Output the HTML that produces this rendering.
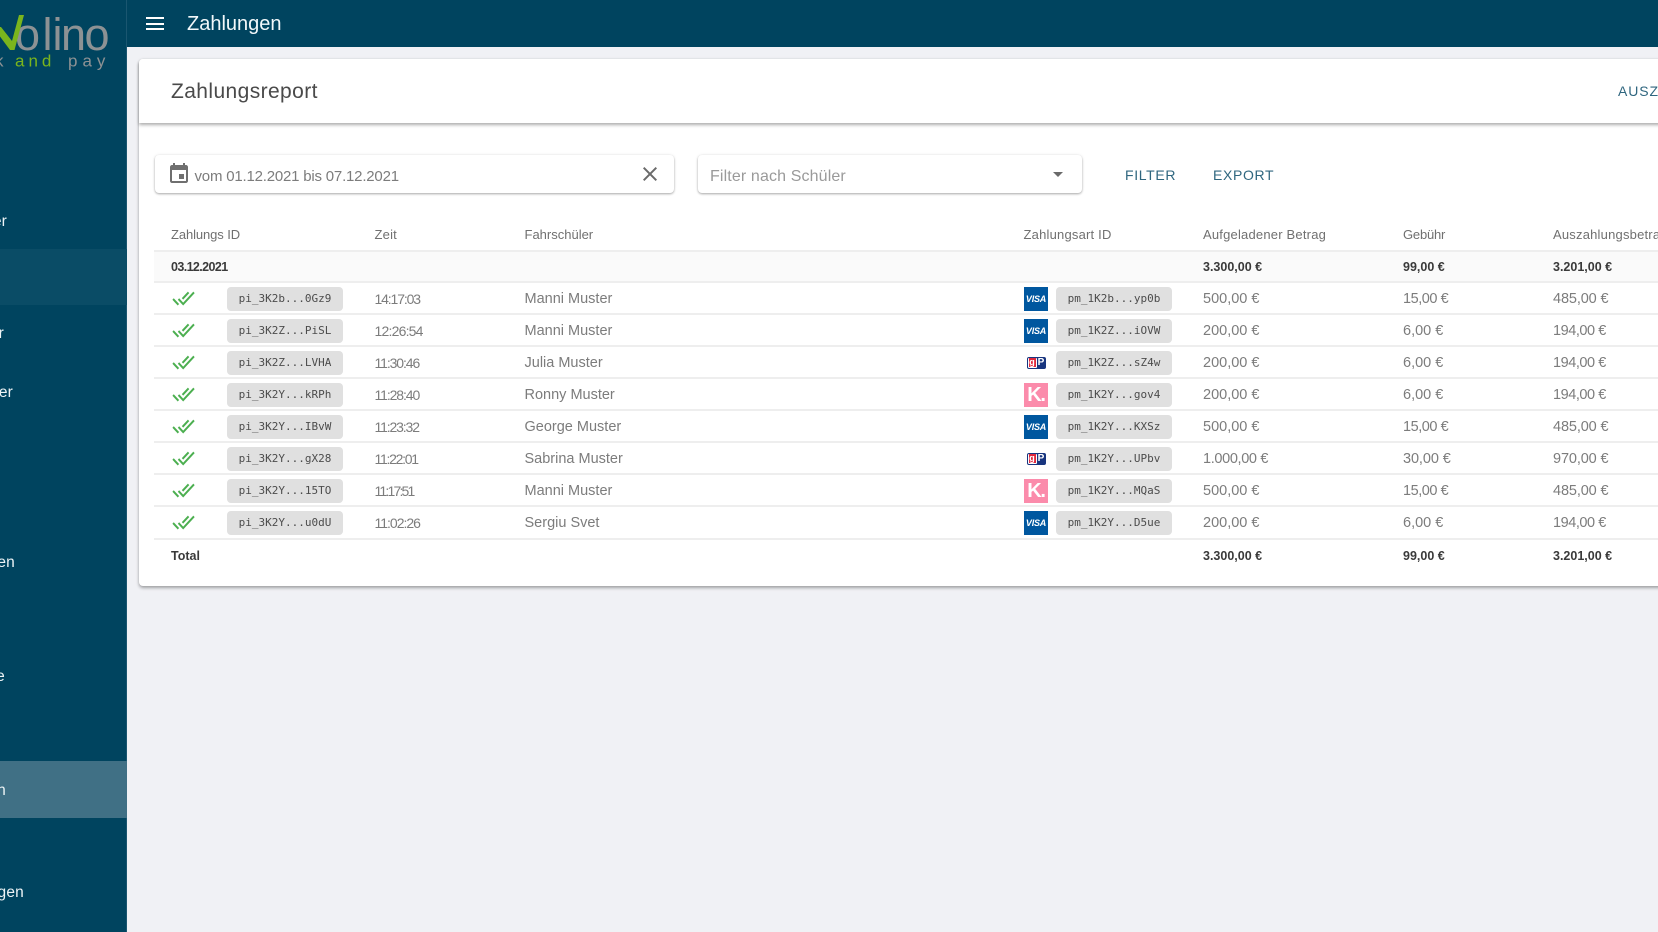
<!DOCTYPE html>
<html lang="de">
<head>
<meta charset="utf-8">
<title>Zahlungen</title>
<style>
html,body{margin:0;padding:0;width:1658px;height:932px;overflow:hidden;background:#f0f1f5;font-family:"Liberation Sans",sans-serif;color:#787878}
*{box-sizing:border-box}
#wrap{position:absolute;left:0;top:0;width:1658px;height:932px;overflow:hidden;filter:blur(.35px)}
.a{position:absolute;white-space:nowrap}
#side{position:absolute;left:0;top:0;width:127px;height:932px;background:#00445f;overflow:hidden}
#side .ln{position:absolute;left:126px;top:0;width:1px;height:932px;background:#1a5670}
#side .it{position:absolute;left:0;width:127px}
#side .t{position:absolute;color:#eef4f6;font-size:15.5px;line-height:20px;white-space:nowrap;letter-spacing:.2px}
#top{position:absolute;left:127px;top:0;width:1531px;height:47px;background:#00445f}
#top i{position:absolute;left:19px;width:18px;height:2px;background:#fff;display:block}
#card{position:absolute;left:139px;top:59px;width:1530px;height:527px;background:#fff;border-radius:4px;box-shadow:0 2px 3px rgba(0,0,0,.32),0 0 3px rgba(0,0,0,.08)}
#head{position:absolute;left:139px;top:59px;width:1530px;height:64px;background:#fff;border-radius:4px 4px 0 0;box-shadow:0 2px 3px rgba(0,0,0,.32)}
.field{position:absolute;top:155px;height:38px;background:#fff;border-radius:4px;box-shadow:0 1px 2px rgba(0,0,0,.32),0 0 4px rgba(0,0,0,.06)}
.btn{position:absolute;top:165px;line-height:20px;font-size:14px;color:#2f667f;letter-spacing:.65px;white-space:nowrap}
.h{position:absolute;top:225px;line-height:20px;font-size:13px;color:#707070;letter-spacing:.2px;white-space:nowrap}
.row{position:absolute;left:154px;width:1504px;height:32px;border-bottom:2px solid #eeeeee}
.row span{position:absolute;top:0;line-height:33px;font-size:14.5px;color:#7c7c7c;white-space:nowrap}
.row span.b{font-size:12.5px;font-weight:700;color:#3a3a3a;line-height:31px}
.c1{left:17px}.c2{left:220.5px}.c3{left:370.5px}.c5{left:1049px}.c6{left:1249px}.c7{left:1399px}
.row span.c2{font-size:14px;line-height:32px}
.ck{position:absolute;left:17.5px;top:8px;width:23px;height:14.5px}
.chip{position:absolute;top:4px;height:24px;width:116px;background:#e0e0e0;border-radius:4px;font:11px/24px "DejaVu Sans Mono","Liberation Mono",monospace;color:#4c4c4c;text-align:center;white-space:nowrap}
.p1{left:73px}.p2{left:902px}
.ic{position:absolute;left:870px;top:4px;width:24px;height:24px}
.visa{background:#00579f;color:#fff;font:italic 700 9px/24px "Liberation Sans",sans-serif;text-align:center;letter-spacing:-.2px}
.kl{background:#fb8bab;color:#fff;font:700 20px/24px "Liberation Sans",sans-serif;text-align:center;letter-spacing:-1.2px}
.gp{left:872.5px;top:9.5px;width:19px;height:12px;background:#18357f;border-radius:2px}
.gp b{position:absolute;left:1px;top:1px;width:9px;height:10px;background:#fff;border-radius:1px}
.gp u{position:absolute;left:2px;top:1.5px;width:7px;height:9px;background:#e0283c;color:#fff;font:700 9px/8px "Liberation Sans",sans-serif;text-align:center;text-decoration:none}
.gp em{position:absolute;left:10.5px;top:1px;width:8px;color:#fff;font:700 10px/10px "Liberation Sans",sans-serif;text-align:center}
</style>
</head>
<body>
<svg width="0" height="0" style="position:absolute"><defs><symbol id="dn" viewBox="0 5 24 14" preserveAspectRatio="none"><path fill="#4caf50" d="M18 7l-1.41-1.41-6.34 6.34 1.41 1.41L18 7zm4.24-1.41L11.66 16.17 7.48 12l-1.41 1.41L11.66 19l12-12-1.42-1.41zM.41 13.41L6 19l1.41-1.41L1.83 12 .41 13.41z"/></symbol></defs></svg>
<div id="wrap">
<div id="side">
  <div class="ln"></div>
  <svg class="a" style="left:0;top:0" width="126" height="76" viewBox="0 0 126 76">
    <text y="50" x="15 42.5 52.5 61 84.5" font-family="Liberation Sans" font-size="45" fill="#8d9294">olino</text>
    <polygon points="-7,27 1,27 12,41 19,15 24,15 14.5,50 10,50" fill="#7ab51d"/>
    <text y="66.5" x="-5" font-family="Liberation Sans" font-size="17" fill="#8d9294">k</text>
    <text y="66.5" x="15" font-family="Liberation Sans" font-size="17" letter-spacing="4" fill="#7ab51d">and</text>
    <text y="66.5" x="68" font-family="Liberation Sans" font-size="17" letter-spacing="5" fill="#8d9294">pay</text>
  </svg>
  <div class="it" style="top:249px;height:56px;background:#0a4c66"></div>
  <div class="it" style="top:761px;height:57px;background:#407085"></div>
  <div class="t" style="right:120px;top:212px">er</div>
  <div class="t" style="right:123px;top:324px">r</div>
  <div class="t" style="right:114px;top:383px">er</div>
  <div class="t" style="right:112px;top:553px">en</div>
  <div class="t" style="right:122px;top:667px">e</div>
  <div class="t" style="right:121px;top:781px">n</div>
  <div class="t" style="right:103px;top:883px">gen</div>
</div>

<div id="top">
  <i style="top:17px"></i><i style="top:22.5px"></i><i style="top:28px"></i>
  <div class="a" style="left:60px;top:12px;font-size:20px;line-height:25px;color:#f2f8fa">Zahlungen</div>
</div>

<div id="card"></div>
<div id="head"></div>
<div class="a" style="left:171px;top:79px;font-size:21px;line-height:26px;color:#4a4a4a;letter-spacing:.4px">Zahlungsreport</div>
<div class="a" style="left:1618px;top:81px;font-size:14px;line-height:20px;color:#2f667f;letter-spacing:.9px">AUSZAHLUNG</div>

<div class="field" style="left:155px;width:519px"></div>
<svg class="a" style="left:167px;top:162px" width="24" height="24" viewBox="0 0 24 24"><path fill="#6f6f6f" d="M17 12h-5v5h5v-5zM16 1v2H8V1H6v2H5c-1.11 0-1.99.9-1.99 2L3 19c0 1.1.89 2 2 2h14c1.1 0 2-.9 2-2V5c0-1.1-.9-2-2-2h-1V1h-2zm3 18H5V8h14v11z"/></svg>
<div class="a" style="left:194.5px;top:166.5px;font-size:15px;line-height:20px;color:#7c7c7c;letter-spacing:-.2px">vom 01.12.2021 bis 07.12.2021</div>
<svg class="a" style="left:637.5px;top:161.5px" width="24" height="24" viewBox="0 0 24 24"><path fill="#6a6a6a" d="M19 6.41L17.59 5 12 10.59 6.41 5 5 6.41 10.59 12 5 17.59 6.41 19 12 13.41 17.59 19 19 17.59 13.41 12z"/></svg>

<div class="field" style="left:698px;width:384px"></div>
<div class="a" style="left:710px;top:166.5px;font-size:16px;line-height:20px;color:#9a9a9a;letter-spacing:.13px">Filter nach Schüler</div>
<svg class="a" style="left:1053px;top:172px" width="10" height="5" viewBox="0 0 10 5"><path fill="#6a6a6a" d="M0 0h10L5 5z"/></svg>
<div class="btn" style="left:1125px">FILTER</div>
<div class="btn" style="left:1213px">EXPORT</div>

<div class="h" style="left:171px;letter-spacing:-.1px">Zahlungs ID</div>
<div class="h" style="left:374.5px">Zeit</div>
<div class="h" style="left:524.5px;letter-spacing:0">Fahrschüler</div>
<div class="h" style="left:1023.5px">Zahlungsart ID</div>
<div class="h" style="left:1203px">Aufgeladener Betrag</div>
<div class="h" style="left:1403px;letter-spacing:-.2px">Gebühr</div>
<div class="h" style="left:1553px">Auszahlungsbetrag</div>

<div class="row" style="top:249.5px;height:33.5px;background:#fafafa;border-top:2px solid #eeeeee">
  <span class="b c1" style="letter-spacing:-.6px">03.12.2021</span>
  <span class="b c5">3.300,00 €</span>
  <span class="b c6">99,00 €</span>
  <span class="b c7">3.201,00 €</span>
</div>

<div class="row" style="top:283px"><svg class="ck"><use href="#dn"/></svg><div class="chip p1">pi_3K2b...0Gz9</div><span class="c2" style="letter-spacing:-1.14px">14:17:03</span><span class="c3">Manni Muster</span><div class="ic visa">VISA</div><div class="chip p2">pm_1K2b...yp0b</div><span class="c5">500,00 €</span><span class="c6" style="letter-spacing:-.45px">15,00 €</span><span class="c7" style="letter-spacing:-.12px">485,00 €</span></div>

<div class="row" style="top:315px"><svg class="ck"><use href="#dn"/></svg><div class="chip p1">pi_3K2Z...PiSL</div><span class="c2" style="letter-spacing:-.79px">12:26:54</span><span class="c3">Manni Muster</span><div class="ic visa">VISA</div><div class="chip p2">pm_1K2Z...iOVW</div><span class="c5">200,00 €</span><span class="c6">6,00 €</span><span class="c7" style="letter-spacing:-.45px">194,00 €</span></div>

<div class="row" style="top:347px"><svg class="ck"><use href="#dn"/></svg><div class="chip p1">pi_3K2Z...LVHA</div><span class="c2" style="letter-spacing:-1.1px">11:30:46</span><span class="c3">Julia Muster</span><div class="ic gp"><b></b><u>g</u><em>P</em></div><div class="chip p2">pm_1K2Z...sZ4w</div><span class="c5">200,00 €</span><span class="c6">6,00 €</span><span class="c7" style="letter-spacing:-.45px">194,00 €</span></div>

<div class="row" style="top:379px"><svg class="ck"><use href="#dn"/></svg><div class="chip p1">pi_3K2Y...kRPh</div><span class="c2" style="letter-spacing:-1.1px">11:28:40</span><span class="c3">Ronny Muster</span><div class="ic kl">K.</div><div class="chip p2">pm_1K2Y...gov4</div><span class="c5">200,00 €</span><span class="c6">6,00 €</span><span class="c7" style="letter-spacing:-.45px">194,00 €</span></div>

<div class="row" style="top:411px"><svg class="ck"><use href="#dn"/></svg><div class="chip p1">pi_3K2Y...IBvW</div><span class="c2" style="letter-spacing:-1.14px">11:23:32</span><span class="c3">George Muster</span><div class="ic visa">VISA</div><div class="chip p2">pm_1K2Y...KXSz</div><span class="c5">500,00 €</span><span class="c6" style="letter-spacing:-.45px">15,00 €</span><span class="c7" style="letter-spacing:-.12px">485,00 €</span></div>

<div class="row" style="top:443px"><svg class="ck"><use href="#dn"/></svg><div class="chip p1">pi_3K2Y...gX28</div><span class="c2" style="letter-spacing:-1.27px">11:22:01</span><span class="c3">Sabrina Muster</span><div class="ic gp"><b></b><u>g</u><em>P</em></div><div class="chip p2">pm_1K2Y...UPbv</div><span class="c5" style="letter-spacing:-.35px">1.000,00 €</span><span class="c6" style="letter-spacing:-.1px">30,00 €</span><span class="c7" style="letter-spacing:-.12px">970,00 €</span></div>

<div class="row" style="top:475px"><svg class="ck"><use href="#dn"/></svg><div class="chip p1">pi_3K2Y...15TO</div><span class="c2" style="letter-spacing:-1.81px">11:17:51</span><span class="c3">Manni Muster</span><div class="ic kl">K.</div><div class="chip p2">pm_1K2Y...MQaS</div><span class="c5">500,00 €</span><span class="c6" style="letter-spacing:-.45px">15,00 €</span><span class="c7" style="letter-spacing:-.12px">485,00 €</span></div>

<div class="row" style="top:507px;height:33px"><svg class="ck"><use href="#dn"/></svg><div class="chip p1">pi_3K2Y...u0dU</div><span class="c2" style="letter-spacing:-1px">11:02:26</span><span class="c3">Sergiu Svet</span><div class="ic visa">VISA</div><div class="chip p2">pm_1K2Y...D5ue</div><span class="c5">200,00 €</span><span class="c6">6,00 €</span><span class="c7" style="letter-spacing:-.45px">194,00 €</span></div>

<div class="row" style="top:540.5px;border-bottom:0">
  <span class="b c1">Total</span>
  <span class="b c5">3.300,00 €</span>
  <span class="b c6">99,00 €</span>
  <span class="b c7">3.201,00 €</span>
</div>
</div>
</body>
</html>
